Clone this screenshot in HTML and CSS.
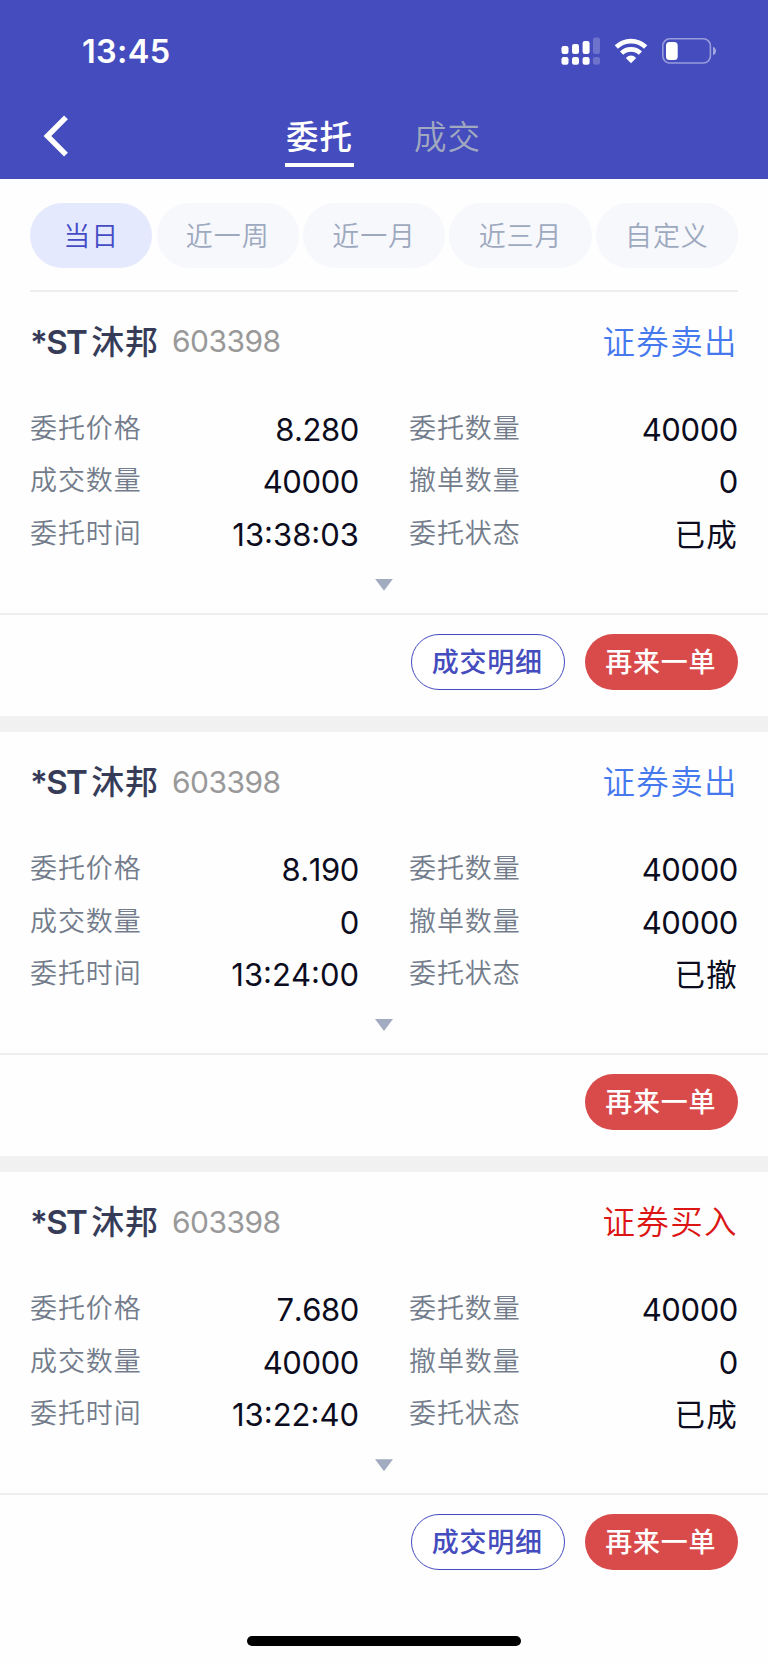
FILE: index.html
```html
<!DOCTYPE html>
<html lang="zh-CN">

<head>
    <meta charset="UTF-8">
    <meta name="viewport" content="width=device-width, initial-scale=1.0">
    <title>委托</title>
    <link rel="stylesheet" href="styles.css">
</head>

<body>
    <header class="header">
        <div class="status-bar">
            <span class="time">13:45</span>
            <svg class="status-icons" width="156" height="30" viewBox="561 36 156 30">
                <g fill="#fff">
                    <rect x="561.5" y="46" width="7" height="8" rx="2.2" />
                    <rect x="572" y="44" width="7" height="10" rx="2.2" />
                    <rect x="582.6" y="41" width="7" height="13" rx="2.2" />
                    <rect x="561.5" y="57" width="7" height="7.7" rx="2.2" />
                    <rect x="572" y="57" width="7" height="7.7" rx="2.2" />
                    <rect x="582.6" y="57" width="7" height="7.7" rx="2.2" />
                    <rect x="593" y="37.5" width="7" height="16.5" rx="2.2" opacity=".22" />
                    <rect x="593" y="57" width="7" height="7.7" rx="2.2" opacity=".22" />
                    <path d="M631 63.2L625.8 58Q631 53.2 636.2 58Z" />
                    <rect x="666" y="42" width="11.7" height="18" rx="3.5" />
                    <path d="M713 46.8Q716 48 716 51T713 55.2Z" opacity=".5" />
                </g>
                <g fill="none" stroke="#fff">
                    <path d="M616.3 47A21.3 21.3 0 0 1 645.7 47" stroke-width="4.7" />
                    <path d="M621.6 53.1A13.6 13.6 0 0 1 640.4 53.1" stroke-width="4.6" />
                    <rect x="662.8" y="38.8" width="47.6" height="24.2" rx="7" stroke-width="1.6" opacity=".45" />
                </g>
            </svg>
        </div>
        <nav class="nav">
            <svg class="back" width="26" height="42" viewBox="0 0 26 42">
                <path d="M23 2.3L4.4 21L23 39.7" fill="none" stroke="#fff" stroke-width="5.4" />
            </svg>
            <div class="tabs">
                <span class="tab active">委托</span>
                <span class="tab">成交</span>
            </div>
        </nav>
    </header>

    <div class="filters">
        <span class="pill selected">当日</span>
        <span class="pill">近一周</span>
        <span class="pill">近一月</span>
        <span class="pill">近三月</span>
        <span class="pill">自定义</span>
    </div>

    <section class="order">
        <div class="order-head">
            <span class="name"><span class="st">*ST</span>沐邦</span>
            <span class="code">603398</span>
            <span class="side sell">证券卖出</span>
        </div>
        <div class="details">
            <div class="row"><span class="label">委托价格</span><span class="value">8.280</span></div>
            <div class="row"><span class="label">委托数量</span><span class="value">40000</span></div>
            <div class="row"><span class="label">成交数量</span><span class="value">40000</span></div>
            <div class="row"><span class="label">撤单数量</span><span class="value">0</span></div>
            <div class="row"><span class="label">委托时间</span><span class="value clock">13:38:03</span></div>
            <div class="row"><span class="label">委托状态</span><span class="value state">已成</span></div>
        </div>
        <div class="expand"><span class="arrow"></span></div>
        <div class="actions">
            <button class="btn outline">成交明细</button>
            <button class="btn primary">再来一单</button>
        </div>
    </section>

    <section class="order">
        <div class="order-head">
            <span class="name"><span class="st">*ST</span>沐邦</span>
            <span class="code">603398</span>
            <span class="side sell">证券卖出</span>
        </div>
        <div class="details">
            <div class="row"><span class="label">委托价格</span><span class="value">8.190</span></div>
            <div class="row"><span class="label">委托数量</span><span class="value">40000</span></div>
            <div class="row"><span class="label">成交数量</span><span class="value">0</span></div>
            <div class="row"><span class="label">撤单数量</span><span class="value">40000</span></div>
            <div class="row"><span class="label">委托时间</span><span class="value clock">13:24:00</span></div>
            <div class="row"><span class="label">委托状态</span><span class="value state">已撤</span></div>
        </div>
        <div class="expand"><span class="arrow"></span></div>
        <div class="actions">
            <button class="btn primary">再来一单</button>
        </div>
    </section>

    <section class="order">
        <div class="order-head">
            <span class="name"><span class="st">*ST</span>沐邦</span>
            <span class="code">603398</span>
            <span class="side buy">证券买入</span>
        </div>
        <div class="details">
            <div class="row"><span class="label">委托价格</span><span class="value">7.680</span></div>
            <div class="row"><span class="label">委托数量</span><span class="value">40000</span></div>
            <div class="row"><span class="label">成交数量</span><span class="value">40000</span></div>
            <div class="row"><span class="label">撤单数量</span><span class="value">0</span></div>
            <div class="row"><span class="label">委托时间</span><span class="value clock">13:22:40</span></div>
            <div class="row"><span class="label">委托状态</span><span class="value state">已成</span></div>
        </div>
        <div class="expand"><span class="arrow"></span></div>
        <div class="actions">
            <button class="btn outline">成交明细</button>
            <button class="btn primary">再来一单</button>
        </div>
    </section>

    <div class="home-bar"></div>
</body>

</html>
```
FILE: styles.css
```css
* {
    box-sizing: border-box;
}

body {
    margin: 0;
    height: 1663px;
    overflow: hidden;
    display: flex;
    flex-direction: column;
    background-color: #fefefe;
    font-family: Inter, "Noto Sans CJK SC", sans-serif;
}

.header {
    height: 179.3px;
    flex-shrink: 0;
    background-color: #444cbe;
    color: #fff;
}

.status-bar {
    height: 102px;
    padding: 0 51px 0 82px;
    display: flex;
    justify-content: space-between;
    align-items: center;
}

.time {
    font-size: 32.5px;
    font-weight: 600;
    letter-spacing: 0.3px;
}

.nav {
    height: 77px;
    padding-left: 43px;
    display: flex;
    align-items: flex-start;
}

.back {
    margin-top: 13px;
}

.tabs {
    display: flex;
    gap: 59px;
    margin-left: 216px;
}

.tab {
    width: 69px;
    height: 65px;
    padding-top: 12px;
    font-size: 32.5px;
    line-height: 48px;
    letter-spacing: 1px;
    text-align: center;
    color: #a1a9c0;
    font-weight: 350;
}

.tab.active {
    color: #fff;
    font-weight: 500;
    border-bottom: 4px solid #fff;
}

.filters {
    margin: 0 30px;
    height: 112.7px;
    padding-top: 24px;
    flex-shrink: 0;
    display: flex;
    gap: 4.2px;
    border-bottom: 2px solid #eee;
}

.pill {
    flex: 1 1 142.4px;
    height: 65px;
    line-height: 67px;
    border-radius: 33px;
    background-color: #f6f8fc;
    color: #9ea9bf;
    font-size: 27px;
    font-weight: 350;
    letter-spacing: 0.9px;
    text-align: center;
}

.pill.selected {
    flex: 0 0 122.4px;
    background-color: #e5e9fe;
    color: #444cc4;
}

.order {
    height: 440.2px;
    flex-shrink: 0;
    border-bottom: 16px solid #f1f1f1;
}

.order:last-of-type {
    border-bottom: none;
}

.order-head {
    height: 109px;
    padding: 0 30px 10px;
    display: flex;
    align-items: center;
}

.name {
    padding-bottom: 3px;
    font-size: 33px;
    font-weight: 500;
    letter-spacing: 0.8px;
    color: #363c58;
}

.st {
    margin-right: 5px;
    font-weight: 600;
    letter-spacing: -1.6px;
}

.code {
    margin-left: 13px;
    font-size: 30px;
    font-weight: 400;
    letter-spacing: -0.5px;
    color: #999;
}

.side {
    margin-left: auto;
    padding-bottom: 4px;
    font-size: 32.5px;
    font-weight: 350;
    letter-spacing: 1.4px;
}

.sell {
    color: #4679ee;
}

.buy {
    color: #dc1414;
}

.details {
    padding: 0 30px;
    display: grid;
    grid-template-columns: 1fr 1fr;
    grid-auto-rows: 52.6px;
    column-gap: 50px;
}

.row {
    display: flex;
    justify-content: space-between;
    align-items: center;
}

.label {
    padding-bottom: 2px;
    font-size: 27px;
    font-weight: 350;
    letter-spacing: 0.9px;
    color: #737c8b;
}

.value {
    padding-top: 4px;
    font-size: 31px;
    font-kerning: none;
    letter-spacing: -0.4px;
    color: #0b0c20;
}

.clock {
    letter-spacing: 0;
}

.state {
    padding-top: 1px;
    font-size: 30.5px;
    letter-spacing: 1.2px;
}

.expand {
    height: 55.8px;
    padding-top: 20px;
    display: flex;
    justify-content: center;
    border-bottom: 2px solid #eee;
}

.arrow {
    width: 18px;
    height: 12px;
    background-color: #a1acc1;
    clip-path: polygon(0 0, 100% 0, 50% 100%);
}

.actions {
    padding: 19.5px 30px 0;
    display: flex;
    justify-content: flex-end;
    gap: 20px;
}

.btn {
    width: 153.5px;
    height: 55.5px;
    padding: 0 1px 3px 0;
    border: none;
    border-radius: 28px;
    font-family: inherit;
    font-size: 27px;
    font-weight: 500;
    letter-spacing: 0.8px;
}

.outline {
    background-color: #fff;
    border: 1px solid #444cbe;
    color: #444cbe;
}

.primary {
    background-color: #d94b4b;
    color: #fff;
}

.home-bar {
    width: 274px;
    height: 10px;
    margin: auto auto 17px;
    flex-shrink: 0;
    border-radius: 5px;
    background-color: #000;
}
```
